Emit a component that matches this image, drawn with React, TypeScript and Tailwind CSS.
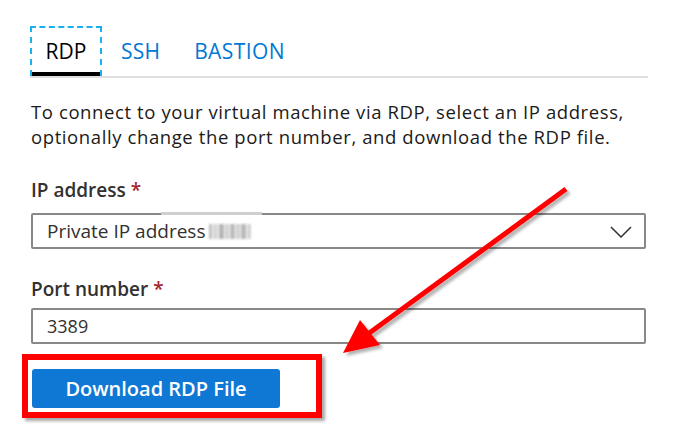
const font = { fontFamily: '"Open Sans", "Noto Sans", sans-serif' };

function Tabs() {
  return (
    <div className="ml-[30px] mt-[26px] flex w-[618px] border-b-2 border-[#e1dfdd]">
      <div className="relative flex h-[50px] w-[72px] items-center justify-center border-2 border-dashed border-[#1ab0ec] text-[21px] text-black">
        <span className="mt-[1px]">RDP</span>
        <div className="absolute -bottom-[2px] left-0 right-0 h-[4px] bg-black" />
      </div>
      <div className="flex h-[50px] items-center pl-[19px] pt-[2px] text-[21px] tracking-[0.2px] text-[#0078d4]">SSH</div>
      <div className="flex h-[50px] items-center pl-[34px] pt-[2px] text-[21px] tracking-[0.4px] text-[#0078d4]">BASTION</div>
    </div>
  );
}

function Label({ text }: { text: string }) {
  return (
    <div className="text-[19px] font-semibold leading-[24px] text-[#323130]">
      {text} <span className="text-[#a4262c]">*</span>
    </div>
  );
}

function BlurredIp() {
  return (
    <span className="ml-[4px] inline-flex h-[18px] items-center gap-[1px] blur-[1px]">
      <span className="h-[15px] w-[3px] bg-[#bdbdbd]" />
      <span className="h-[15px] w-[5px] bg-[#d6d6d6]" />
      <span className="h-[15px] w-[5px] bg-[#b5b5b5]" />
      <span className="h-[15px] w-[4px] bg-[#d0d0d0]" />
      <span className="h-[15px] w-[5px] bg-[#bcbcbc]" />
      <span className="h-[15px] w-[4px] bg-[#cfcfcf]" />
      <span className="h-[15px] w-[5px] bg-[#b8b8b8]" />
      <span className="h-[15px] w-[4px] bg-[#d4d4d4]" />
    </span>
  );
}

function Chevron() {
  return (
    <svg width="22" height="12" viewBox="0 0 22 12" className="mt-[2px]">
      <polyline points="1,1 11,11 21,1" fill="none" stroke="#323130" strokeWidth="1.5" />
    </svg>
  );
}

function Arrow() {
  return (
    <svg className="pointer-events-none absolute left-0 top-0" width="674" height="428">
      <defs>
        <filter id="sh" x="-20%" y="-20%" width="140%" height="140%">
          <feDropShadow dx="3" dy="3" stdDeviation="1.5" floodColor="#000" floodOpacity="0.3" />
        </filter>
      </defs>
      <g filter="url(#sh)">
        <line x1="566" y1="189" x2="368" y2="334" stroke="#ff0000" strokeWidth="5" />
        <polygon points="343,353 360,320 380,345" fill="#ff0000" />
      </g>
    </svg>
  );
}

export default function App() {
  return (
    <div className="relative h-[428px] w-[674px] overflow-hidden bg-white" style={font}>
      <Tabs />
      <div className="pl-[31px]">
        <p className="mt-[21px] text-[18.5px] leading-[25px] tracking-[0.6px] text-[#1b1a19]">
          To connect to your virtual machine via RDP, select an IP address,
          <br />
          optionally change the port number, and download the RDP file.
        </p>
        <div className="mt-[29px]">
          <Label text="IP address" />
        </div>
        <div className="relative mt-[11px] flex h-[36px] w-[615px] items-center justify-between rounded-[2px] border-2 border-[#8a8886] pl-[14px] pr-[12px] text-[19px] text-[#323130]">
          <div className="absolute -top-[3px] left-[128px] h-[3px] w-[101px] bg-[#cfcfcf]" />
          <span className="flex items-center">
            Private IP address
            <BlurredIp />
          </span>
          <Chevron />
        </div>
        <div className="mt-[28px]">
          <Label text="Port number" />
        </div>
        <div className="mt-[7px] flex h-[36px] w-[615px] items-center rounded-[2px] border-2 border-[#8a8886] pl-[14px] text-[18px] text-[#323130]">
          3389
        </div>
        <div className="-ml-[9px] mt-[10px] w-[300px] border-[6px] border-[#ff0000] pb-[4px] pl-[4px] pt-[9px] shadow-[3px_3px_3px_rgba(0,0,0,0.35)]">
          <button className="flex h-[39px] w-[248px] items-center justify-center rounded-[3px] bg-[#0f78d4] text-[20px] font-semibold text-white">
            Download RDP File
          </button>
        </div>
      </div>
      <Arrow />
    </div>
  );
}
